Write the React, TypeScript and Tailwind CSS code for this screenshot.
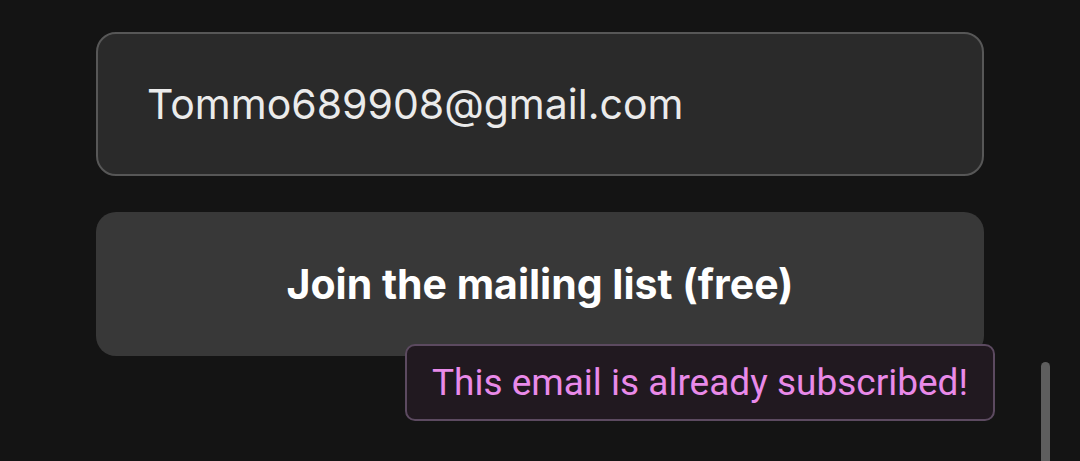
export default function App() {
  return (
    <div className="relative h-[461px] w-[1080px] overflow-hidden bg-[#141414]">
      <div className="ml-[96px] flex w-[888px] flex-col gap-[36px] pt-[32px]">
        {/* email field */}
        <div className="flex h-[144px] items-center rounded-[20px] border-2 border-[#575757] bg-[#2a2a2a] pl-[49px]">
          <span
            className="text-[41px] leading-none text-[#ebebeb]"
            style={{ fontFamily: "Inter, 'Noto Sans', sans-serif" }}
          >
            Tommo689908@gmail.com
          </span>
        </div>

        {/* submit */}
        <div className="relative">
          <button
            className="flex h-[144px] w-full items-center justify-center rounded-[20px] bg-[#383838] text-[41px] font-bold leading-none text-white"
            style={{ fontFamily: "Inter, 'Noto Sans', sans-serif" }}
          >
            Join the mailing list (free)
          </button>

          {/* error tooltip */}
          <div className="absolute right-[-11px] top-[132px] flex h-[77px] items-center rounded-[10px] border-2 border-[#5c4a60] bg-[#211920] px-[25px]">
            <span
              className="text-[37px] leading-none text-[#e98ae9]"
              style={{ fontFamily: "Roboto, 'Liberation Sans', sans-serif" }}
            >
              This email is already subscribed!
            </span>
          </div>
        </div>
      </div>

      {/* scrollbar thumb */}
      <div className="absolute left-[1041px] top-[362px] h-[120px] w-[9px] rounded-full bg-[#5e5e5e]" />
    </div>
  );
}
